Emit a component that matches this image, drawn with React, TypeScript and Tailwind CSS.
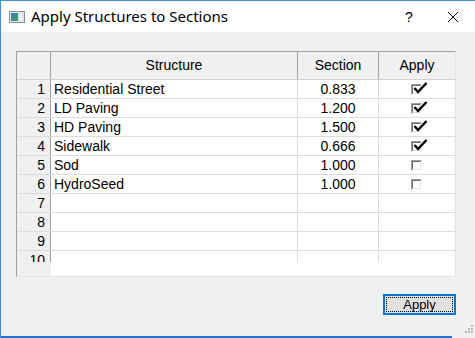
import React from "react";

type Row = { name: string; section: string; apply: boolean };

const rows: Row[] = [
  { name: "Residential Street", section: "0.833", apply: true },
  { name: "LD Paving", section: "1.200", apply: true },
  { name: "HD Paving", section: "1.500", apply: true },
  { name: "Sidewalk", section: "0.666", apply: true },
  { name: "Sod", section: "1.000", apply: false },
  { name: "HydroSeed", section: "1.000", apply: false },
  { name: "", section: "", apply: false },
  { name: "", section: "", apply: false },
  { name: "", section: "", apply: false },
  { name: "", section: "", apply: false },
];

function CheckBox({ checked }: { checked: boolean }) {
  return (
    <div className="relative w-[16px] h-[11px]">
      {/* sunken box */}
      <div className="w-[11px] h-[11px] border-t border-l border-[#a0a0a0] border-r-white border-b-white border-r border-b">
        <div className="w-full h-full border-t border-l border-[#696969] border-r border-b border-r-[#e3e3e3] border-b-[#e3e3e3] bg-white" />
      </div>
      {checked && (
        <svg
          viewBox="0 0 16 12"
          className="absolute left-[1px] top-[-2px] w-[16px] h-[12px]"
          fill="none"
          stroke="#000"
          strokeWidth="2.4"
        >
          <path d="M2.5 6 L6 10 L14.5 1" />
        </svg>
      )}
    </div>
  );
}

function TitleIcon() {
  return (
    <svg viewBox="0 0 16 12" className="w-[16px] h-[12px]">
      <defs>
        <linearGradient id="ti" x1="0" y1="0" x2="1" y2="1">
          <stop offset="0" stopColor="#3a6fb5" />
          <stop offset="1" stopColor="#3fa85a" />
        </linearGradient>
      </defs>
      <rect x="0.5" y="0.5" width="15" height="11" fill="#e8eef4" stroke="#8c8c8c" />
      <rect x="2" y="2" width="7" height="8" fill="url(#ti)" />
      <rect x="10" y="2" width="4" height="8" fill="#f4f7f9" stroke="#b5c2cc" strokeWidth="0.5" />
    </svg>
  );
}

export default function App() {
  return (
    <div className="relative w-[475px] h-[338px] flex flex-col bg-[#f0f0f0] border-l border-t border-[#3d8fe0] overflow-hidden font-['Liberation_Sans',Arial,sans-serif] text-black">
      {/* Title bar */}
      <div className="h-[31px] shrink-0 bg-white flex items-center">
        <div className="ml-[8px] mt-[1px]">
          <TitleIcon />
        </div>
        <div className="ml-[6px] text-[15px] leading-none font-['Noto_Sans',sans-serif]">Apply Structures to Sections</div>
        <div className="ml-auto w-[42px] text-center text-[14px] leading-none">?</div>
        <div className="w-[46px] flex justify-center mr-[-1px]">
          <svg viewBox="0 0 10 10" className="w-[10px] h-[10px]" stroke="#000" strokeWidth="1">
            <path d="M0 0 L10 10 M10 0 L0 10" />
          </svg>
        </div>
      </div>

      {/* Content */}
      <div className="flex-1 flex flex-col pl-[15px] pt-[19px]">
        <div className="w-[440px] h-[226px] flex flex-col bg-white border-t border-l border-[#a0a0a0] border-r border-b border-r-[#e3e3e3] border-b-[#e3e3e3] text-[14px]">
          {/* header */}
          <div className="h-[28px] shrink-0 flex bg-[#f0f0f0] border-b border-[#d0d0d0]">
            <div className="w-[34px] border-r border-[#a0a0a0]" />
            <div className="w-[247px] border-r border-[#a0a0a0] flex items-center justify-center">Structure</div>
            <div className="w-[81px] border-r border-[#a0a0a0] flex items-center justify-center">Section</div>
            <div className="w-[76px] flex items-center justify-center">Apply</div>
          </div>
          {/* rows */}
          <div className="h-[182px] shrink-0 overflow-hidden flex flex-col">
            {rows.map((r, i) => (
              <div key={i} className="h-[19px] shrink-0 flex border-b border-[#dcdcdc]">
                <div className="w-[34px] bg-[#f0f0f0] border-r border-[#a0a0a0] flex items-center justify-end pr-[5px]">
                  {i + 1}
                </div>
                <div className="w-[247px] border-r border-[#dcdcdc] flex items-center pl-[3px]">{r.name}</div>
                <div className="w-[81px] border-r border-[#dcdcdc] flex items-center justify-center">{r.section}</div>
                <div className="w-[76px] flex items-center justify-center pl-[3px]">
                  {i < 6 && <CheckBox checked={r.apply} />}
                </div>
              </div>
            ))}
          </div>
          {/* filler */}
          <div className="flex-1 flex">
            <div className="w-[34px] bg-[#f0f0f0]" />
            <div className="flex-1 bg-white" />
          </div>
        </div>

        {/* Button */}
        <div className="flex justify-end pr-[19px] mt-[17px]">
          <button className="w-[73px] h-[21px] border-2 border-[#0078d7] bg-[#e1e1e1] p-[1px]">
            <div className="w-full h-full border border-dotted border-black flex items-center justify-center text-[13px] leading-none">
              Apply
            </div>
          </button>
        </div>
      </div>

      {/* bottom edge */}
      <div className="h-[2px] w-[451px] bg-[#1e74d4] shrink-0" />

      {/* resize grip */}
      <svg className="absolute right-[2px] bottom-[3px] w-[10px] h-[10px]" viewBox="0 0 10 10" fill="#b8b8b8">
        <rect x="8" y="0" width="2" height="2" />
        <rect x="5" y="3" width="2" height="2" />
        <rect x="8" y="3" width="2" height="2" />
        <rect x="2" y="6" width="2" height="2" />
        <rect x="5" y="6" width="2" height="2" />
        <rect x="8" y="6" width="2" height="2" />
      </svg>
    </div>
  );
}
